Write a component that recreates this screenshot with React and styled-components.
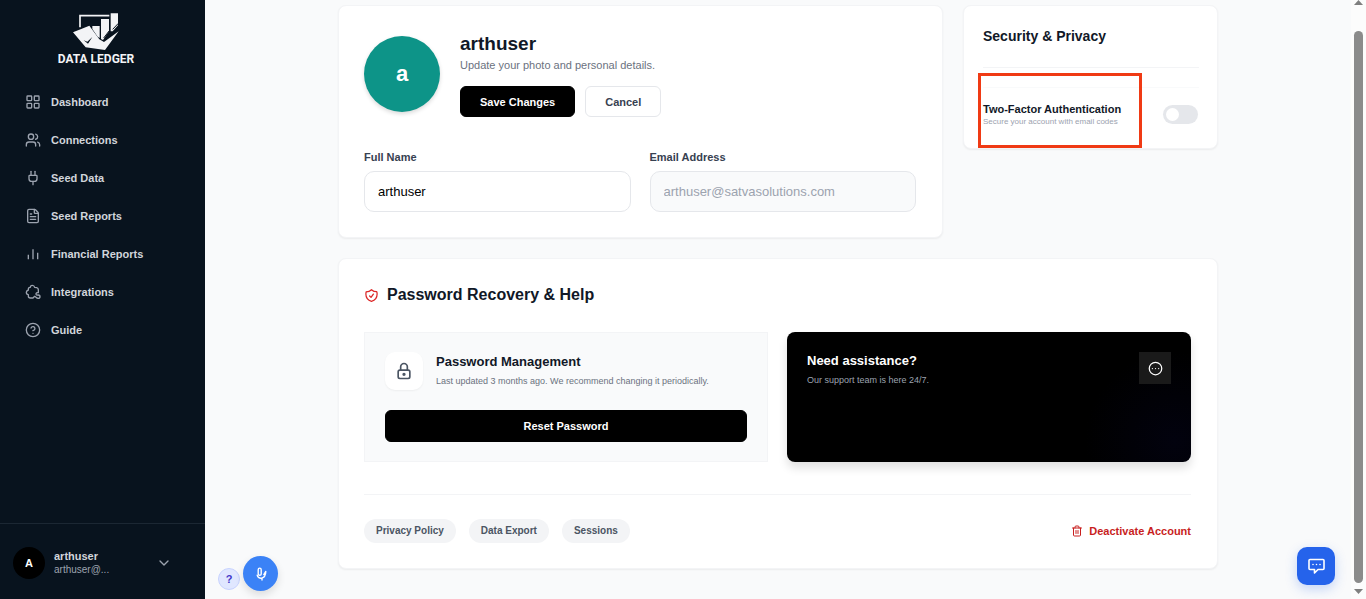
import { useState } from "react"
import styled, { createGlobalStyle, css } from "styled-components"
import {
  ChevronDown,
  CircleEllipsis,
  CircleQuestionMark,
  FileText,
  LayoutGrid,
  Plug,
  Trash2,
  Users,
} from "lucide-react"
import { HiOutlineShieldCheck } from "react-icons/hi2"
import { TbLock } from "react-icons/tb"

const GlobalStyle = createGlobalStyle`
  * {
    box-sizing: border-box;
  }

  body {
    margin: 0;
    background-color: #f9fafb;
    font-family: "Liberation Sans", Arial, sans-serif;
    color: #111827;
  }

  h1, h2, h3, p, ul {
    margin: 0;
    padding: 0;
  }

  button, input {
    font-family: inherit;
  }

  button {
    cursor: pointer;
  }
`

const Page = styled.div`
  display: flex;
  height: 100vh;
  overflow: hidden;
`

// Sidebar
const Sidebar = styled.aside`
  display: flex;
  flex-direction: column;
  flex: 0 0 205px;
  background-color: #08131e;
  color: #d1d5db;
`

const Logo = styled.a`
  display: flex;
  flex-direction: column;
  align-items: center;
  padding: 13px 13px 0 0;
  color: #f3f4f6;
  font-family: Roboto, sans-serif;
  font-size: 12px;
  font-weight: 700;
  line-height: 18px;
  text-decoration: none;
`

const NavList = styled.ul`
  flex: 1;
  padding-top: 15px;
  list-style: none;
`

const NavLink = styled.a`
  display: flex;
  align-items: center;
  gap: 10px;
  height: 38px;
  padding-left: 25px;
  color: #d1d5db;
  font-size: 11px;
  font-weight: 700;
  text-decoration: none;

  svg {
    width: 16px;
    height: 16px;
    color: #9ca3af;
  }
`

const UserMenu = styled.button`
  display: flex;
  align-items: center;
  gap: 9px;
  padding: 23px 33px 20px 13px;
  border: 0;
  border-top: 1px solid #1b2733;
  background: none;
  color: #9ca3af;
  text-align: left;
`

const UserInitial = styled.span`
  display: flex;
  align-items: center;
  justify-content: center;
  width: 32px;
  height: 32px;
  border-radius: 50%;
  background-color: #000;
  color: #fff;
  font-size: 11px;
  font-weight: 700;
`

const UserText = styled.span`
  display: flex;
  flex: 1;
  flex-direction: column;
  font-size: 10px;
  line-height: 14px;

  strong {
    color: #d1d5db;
    font-size: 11px;
  }
`

// Content
const Main = styled.main`
  flex: 1;
  min-width: 0;
  overflow: hidden;
  padding: 5px 20px 30px;
`

const Content = styled.div`
  display: grid;
  grid-template-columns: minmax(0, 1fr) 255px;
  gap: 20px;
  align-items: start;
  max-width: 880px;
  margin: 0 auto;
`

const Card = styled.section`
  grid-column: ${({ $wide }) => ($wide ? "1 / -1" : "auto")};
  padding: ${({ $compact }) => ($compact ? "19px 18px 0 19px" : "25px 26px 25px 25px")};
  border: 1px solid #f3f4f6;
  border-radius: 8px;
  background-color: #fff;
  box-shadow: 0 1px 2px rgba(0, 0, 0, 0.06);
`

const Profile = styled.div`
  display: flex;
  align-items: center;
  gap: 20px;
  margin-bottom: 32px;
`

const Avatar = styled.div`
  display: flex;
  align-items: center;
  justify-content: center;
  width: 76px;
  height: 76px;
  border-radius: 50%;
  background-color: #0d9488;
  box-shadow: 0 2px 4px rgba(0, 0, 0, 0.15);
  color: #fff;
  font-size: 22px;
  font-weight: 700;
`

const ProfileName = styled.h1`
  font-size: 19px;
  line-height: 26px;
`

const ProfileText = styled.p`
  margin-bottom: 13px;
  color: #6b7280;
  font-size: 11px;
  line-height: 16px;
`

const Actions = styled.div`
  display: flex;
  gap: 10px;
`

const Button = styled.button`
  height: ${({ $block }) => ($block ? "32px" : "31px")};
  width: ${({ $block }) => ($block ? "100%" : "auto")};
  padding: 0 19px;
  border: 1px solid #000;
  border-radius: 6px;
  background-color: #000;
  color: #fff;
  font-size: 11px;
  font-weight: 700;

  ${({ $outline }) =>
    $outline &&
    css`
      border-color: #e5e7eb;
      background-color: #fff;
      color: #374151;
    `}
`

const Fields = styled.div`
  display: grid;
  grid-template-columns: 1fr 1fr;
  gap: 19px;
`

const Label = styled.label`
  display: block;
  margin-bottom: 6px;
  color: #374151;
  font-size: 11px;
  font-weight: 700;
  line-height: 16px;
`

const Input = styled.input`
  display: block;
  width: 100%;
  height: 41px;
  padding: 0 13px;
  border: 1px solid #e5e7eb;
  border-radius: 10px;
  background-color: #fff;
  color: #000;
  font-size: 13px;

  &:disabled {
    background-color: #f9fafb;
    color: #9ca3af;
  }
`

const CardTitle = styled.h2`
  display: flex;
  align-items: center;
  gap: 8px;
  font-size: ${({ $small }) => ($small ? "14px" : "16px")};
  line-height: 22px;

  svg {
    color: #dc2626;
    stroke-width: 2;
  }
`

// Security card
const SettingList = styled.div`
  margin-top: 20px;
  padding-top: 19px;
  border-top: 1px solid #f3f4f6;
`

const Setting = styled.div`
  position: relative;
  display: flex;
  align-items: center;
  justify-content: space-between;
  height: 61px;
  padding-bottom: 7px;
  border-top: 1px solid #f9fafb;
`

const SettingLabel = styled.label`
  display: flex;
  flex-direction: column;
  font-size: 11px;
  font-weight: 700;
  line-height: 14px;

  small {
    color: #9ca3af;
    font-size: 8px;
    font-weight: 400;
    line-height: 12px;
  }
`

const Highlight = styled.div`
  position: absolute;
  top: -15px;
  left: -5px;
  width: 164px;
  height: 75px;
  border: 3px solid #f03a14;
  pointer-events: none;
`

const Toggle = styled.input`
  display: flex;
  align-items: center;
  flex: none;
  width: 35px;
  height: 19px;
  margin: 0 1px 0 0;
  padding: 3px;
  appearance: none;
  border-radius: 10px;
  background-color: #e5e7eb;
  cursor: pointer;

  &::before {
    content: "";
    width: 13px;
    height: 13px;
    border-radius: 50%;
    background-color: #fff;
  }

  &:checked {
    justify-content: flex-end;
    background-color: #000;
  }
`

// Password recovery
const Panels = styled.div`
  display: grid;
  grid-template-columns: 1fr 1fr;
  gap: 19px;
  margin: 26px 0 32px;
`

const PasswordPanel = styled.div`
  padding: 19px 20px;
  border: 1px solid #f3f4f6;
  background-color: #f9fafb;
`

const PanelHeader = styled.div`
  display: flex;
  align-items: center;
  gap: 13px;
  margin-bottom: 20px;
`

const IconTile = styled.span`
  display: flex;
  align-items: center;
  justify-content: center;
  width: 38px;
  height: 38px;
  border-radius: 10px;
  background-color: #fff;
  box-shadow: 0 1px 2px rgba(0, 0, 0, 0.05);
  color: #4b5563;
`

const PanelTitle = styled.h3`
  margin-bottom: 2px;
  font-size: 13px;
  line-height: 18px;
`

const PanelText = styled.p`
  color: ${({ $light }) => ($light ? "#9ca3af" : "#6b7280")};
  font-size: 9px;
  line-height: 16px;
`

const HelpPanel = styled.div`
  display: flex;
  align-items: flex-start;
  justify-content: space-between;
  padding: 20px;
  border-radius: 8px;
  background: radial-gradient(circle at 96% 84%, #02020e 0, #000 90px);
  box-shadow: 0 6px 10px rgba(0, 0, 0, 0.12);
  color: #fff;
`

const ChatButton = styled.button`
  display: flex;
  align-items: center;
  justify-content: center;
  width: 32px;
  height: 32px;
  padding: 0;
  border: 0;
  background-color: #1a1a1a;
  color: #fff;
`

const CardFooter = styled.footer`
  display: flex;
  align-items: center;
  gap: 13px;
  padding-top: 24px;
  border-top: 1px solid #f3f4f6;
`

const Pill = styled.a`
  padding: 0 12px;
  border-radius: 12px;
  background-color: #f3f4f6;
  color: #4b5563;
  font-size: 10px;
  font-weight: 700;
  line-height: 24px;
  text-decoration: none;
`

const Deactivate = styled.button`
  display: flex;
  align-items: center;
  gap: 6px;
  margin-left: auto;
  padding: 0;
  border: 0;
  background: none;
  color: #c81e1e;
  font-size: 11px;
  font-weight: 700;
`

// Floating buttons
const VoiceTools = styled.div`
  position: fixed;
  bottom: 8px;
  left: 218px;
  display: flex;
  align-items: flex-end;
  gap: 3px;
`

const HintButton = styled.button`
  width: 22px;
  height: 22px;
  margin-bottom: 1px;
  padding: 0;
  border: 1px solid #c7d2fe;
  border-radius: 50%;
  background-color: #e0e7ff;
  color: #4338ca;
  font-size: 11px;
  font-weight: 700;
`

const VoiceButton = styled.button`
  display: flex;
  align-items: center;
  justify-content: center;
  width: 35px;
  height: 35px;
  padding: 0;
  border: 0;
  border-radius: 50%;
  background-color: #3b82f6;
  box-shadow: 0 4px 8px rgba(0, 0, 0, 0.12);
`

const MessageButton = styled.button`
  position: fixed;
  right: 31px;
  bottom: 14px;
  display: flex;
  align-items: center;
  justify-content: center;
  width: 38px;
  height: 38px;
  padding: 0;
  border: 0;
  border-radius: 10px;
  background-color: #2563eb;
  box-shadow: 0 4px 12px rgba(37, 99, 235, 0.25);
`

// Scroll track
const ScrollTrack = styled.div`
  display: flex;
  flex: 0 0 15px;
  flex-direction: column;
  align-items: center;
  padding-bottom: 5px;
  background-color: #fcfcfc;
`

const ScrollThumb = styled.div`
  flex: 1;
  width: 9px;
  margin: 26px 0 6px;
  border-radius: 5px;
  background-color: #8b8b8b;
`

const ScrollArrow = styled.div`
  width: 9px;
  height: 5px;
  background-color: #7f7f7f;
  clip-path: ${({ $down }) =>
    $down
      ? "polygon(0 0, 100% 0, 50% 100%)"
      : "polygon(50% 0, 100% 100%, 0 100%)"};
`

const LogoMark = () => (
  <svg width="46" height="37" viewBox="219 37 138 111" aria-hidden="true">
    <path d="M240 80V45H328" fill="none" stroke="#f3f4f6" strokeWidth="5" />
    <path
      d="M219 95L268 75L298 116L312 124L356 92L315 148L257 140Z"
      fill="#f3f4f6"
    />
    <path
      d="M277 76H299V112L293 108L277 85ZM303 55H327V92L309 118L303 115ZM332 38H354V74L338 92H332Z"
      fill="#f3f4f6"
    />
    <path
      d="M311 112L328 90M338 86L355 68"
      fill="none"
      stroke="#08131e"
      strokeWidth="3"
    />
    <path d="M251 119L262 123L277 109L264 129Z" fill="#08131e" />
  </svg>
)

const BarsIcon = () => (
  <svg
    viewBox="0 0 24 24"
    fill="none"
    stroke="currentColor"
    strokeWidth="2"
    aria-hidden="true"
  >
    <path d="M5 13V20M12 5V20M19 10V20" />
  </svg>
)

const IntegrationsIcon = () => (
  <svg
    viewBox="0 0 24 24"
    fill="none"
    stroke="currentColor"
    strokeWidth="2"
    strokeLinejoin="round"
    aria-hidden="true"
  >
    <path d="M8 5C8 3 9.5 2 11 2S14 3 14.5 5L17.5 5.5C19.5 6 20 7 20 8.5V13C18 12.5 16.5 13.5 16.5 15S18 17 19.5 16.500C21.500 16.500 22.500 17.500 22.500 19S21 21.500 19.500 21.500S17.500 21 16.500 20L14.500 18.500L12 21H8C6 21 5 20 5 18V16C3 16 2 14.500 2 12.500S3.500 9.500 5 9V7C5 6 6 5 8 5Z" />
  </svg>
)

const VoiceIcon = () => (
  <svg
    width="15"
    height="15"
    viewBox="0 0 15 15"
    fill="none"
    stroke="#fff"
    strokeWidth="1.4"
    strokeLinecap="round"
    strokeLinejoin="round"
    aria-hidden="true"
  >
    <path d="M5.2 3.8C5.200 1.600 8.200 1.600 8.200 3.800V8C8.200 9.600 5.200 9.600 5.200 8Z" />
    <path d="M4.2 9.2C5 13.400 12.500 14 12.800 5.500L10.800 8.600M9 12.500V14" />
  </svg>
)

const MessageIcon = () => (
  <svg width="17" height="17" viewBox="0 0 17 17" fill="none" aria-hidden="true">
    <path
      d="M2 1.5H15Q16 1.5 16 2.500V10.500Q16 11.500 15 11.500H10L6.500 15V11.500H2Q1 11.500 1 10.500V2.500Q1 1.500 2 1.500Z"
      stroke="#fff"
      strokeWidth="1.6"
      strokeLinejoin="round"
    />
    <path
      d="M5 6.500H5.010M8.500 6.500H8.510M12 6.500H12.010"
      stroke="#fff"
      strokeWidth="1.6"
      strokeLinecap="round"
    />
  </svg>
)

const navItems = [
  { label: "Dashboard", icon: LayoutGrid },
  { label: "Connections", icon: Users },
  { label: "Seed Data", icon: Plug },
  { label: "Seed Reports", icon: FileText },
  { label: "Financial Reports", icon: BarsIcon },
  { label: "Integrations", icon: IntegrationsIcon },
  { label: "Guide", icon: CircleQuestionMark },
]

const App = () => {
  const [fullName, setFullName] = useState("arthuser")
  const [twoFactor, setTwoFactor] = useState(false)

  return (
    <Page>
      <GlobalStyle />
      <Sidebar>
        <Logo href="#">
          <LogoMark />
          DATA LEDGER
        </Logo>
        <NavList>
          {navItems.map(({ label, icon: Icon }) => (
            <li key={label}>
              <NavLink href="#">
                <Icon />
                {label}
              </NavLink>
            </li>
          ))}
        </NavList>
        <UserMenu type="button">
          <UserInitial>A</UserInitial>
          <UserText>
            <strong>arthuser</strong>
            arthuser@...
          </UserText>
          <ChevronDown size={16} />
        </UserMenu>
      </Sidebar>

      <Main>
        <Content>
          <Card>
            <Profile>
              <Avatar>a</Avatar>
              <div>
                <ProfileName>arthuser</ProfileName>
                <ProfileText>Update your photo and personal details.</ProfileText>
                <Actions>
                  <Button type="button">Save Changes</Button>
                  <Button type="button" $outline>
                    Cancel
                  </Button>
                </Actions>
              </div>
            </Profile>
            <Fields>
              <div>
                <Label htmlFor="fullName">Full Name</Label>
                <Input
                  id="fullName"
                  type="text"
                  value={fullName}
                  onChange={(e) => setFullName(e.target.value)}
                />
              </div>
              <div>
                <Label htmlFor="email">Email Address</Label>
                <Input
                  id="email"
                  type="email"
                  value="arthuser@satvasolutions.com"
                  disabled
                />
              </div>
            </Fields>
          </Card>

          <Card $compact>
            <CardTitle $small>Security &amp; Privacy</CardTitle>
            <SettingList>
              <Setting>
                <SettingLabel htmlFor="twoFactor">
                  Two-Factor Authentication
                  <small>Secure your account with email codes</small>
                </SettingLabel>
                <Toggle
                  id="twoFactor"
                  type="checkbox"
                  role="switch"
                  checked={twoFactor}
                  onChange={(e) => setTwoFactor(e.target.checked)}
                />
                <Highlight />
              </Setting>
            </SettingList>
          </Card>

          <Card $wide>
            <CardTitle>
              <HiOutlineShieldCheck size={15} />
              Password Recovery &amp; Help
            </CardTitle>
            <Panels>
              <PasswordPanel>
                <PanelHeader>
                  <IconTile>
                    <TbLock size={20} />
                  </IconTile>
                  <div>
                    <PanelTitle>Password Management</PanelTitle>
                    <PanelText>
                      Last updated 3 months ago. We recommend changing it
                      periodically.
                    </PanelText>
                  </div>
                </PanelHeader>
                <Button type="button" $block>
                  Reset Password
                </Button>
              </PasswordPanel>
              <HelpPanel>
                <div>
                  <PanelTitle>Need assistance?</PanelTitle>
                  <PanelText $light>Our support team is here 24/7.</PanelText>
                </div>
                <ChatButton type="button" aria-label="Chat with support">
                  <CircleEllipsis size={15} />
                </ChatButton>
              </HelpPanel>
            </Panels>
            <CardFooter>
              <Pill href="#">Privacy Policy</Pill>
              <Pill href="#">Data Export</Pill>
              <Pill href="#">Sessions</Pill>
              <Deactivate type="button">
                <Trash2 size={12} />
                Deactivate Account
              </Deactivate>
            </CardFooter>
          </Card>
        </Content>
      </Main>

      <ScrollTrack>
        <ScrollArrow />
        <ScrollThumb />
        <ScrollArrow $down />
      </ScrollTrack>

      <VoiceTools>
        <HintButton type="button">?</HintButton>
        <VoiceButton type="button" aria-label="Voice input">
          <VoiceIcon />
        </VoiceButton>
      </VoiceTools>
      <MessageButton type="button" aria-label="Messages">
        <MessageIcon />
      </MessageButton>
    </Page>
  )
}

export default App
